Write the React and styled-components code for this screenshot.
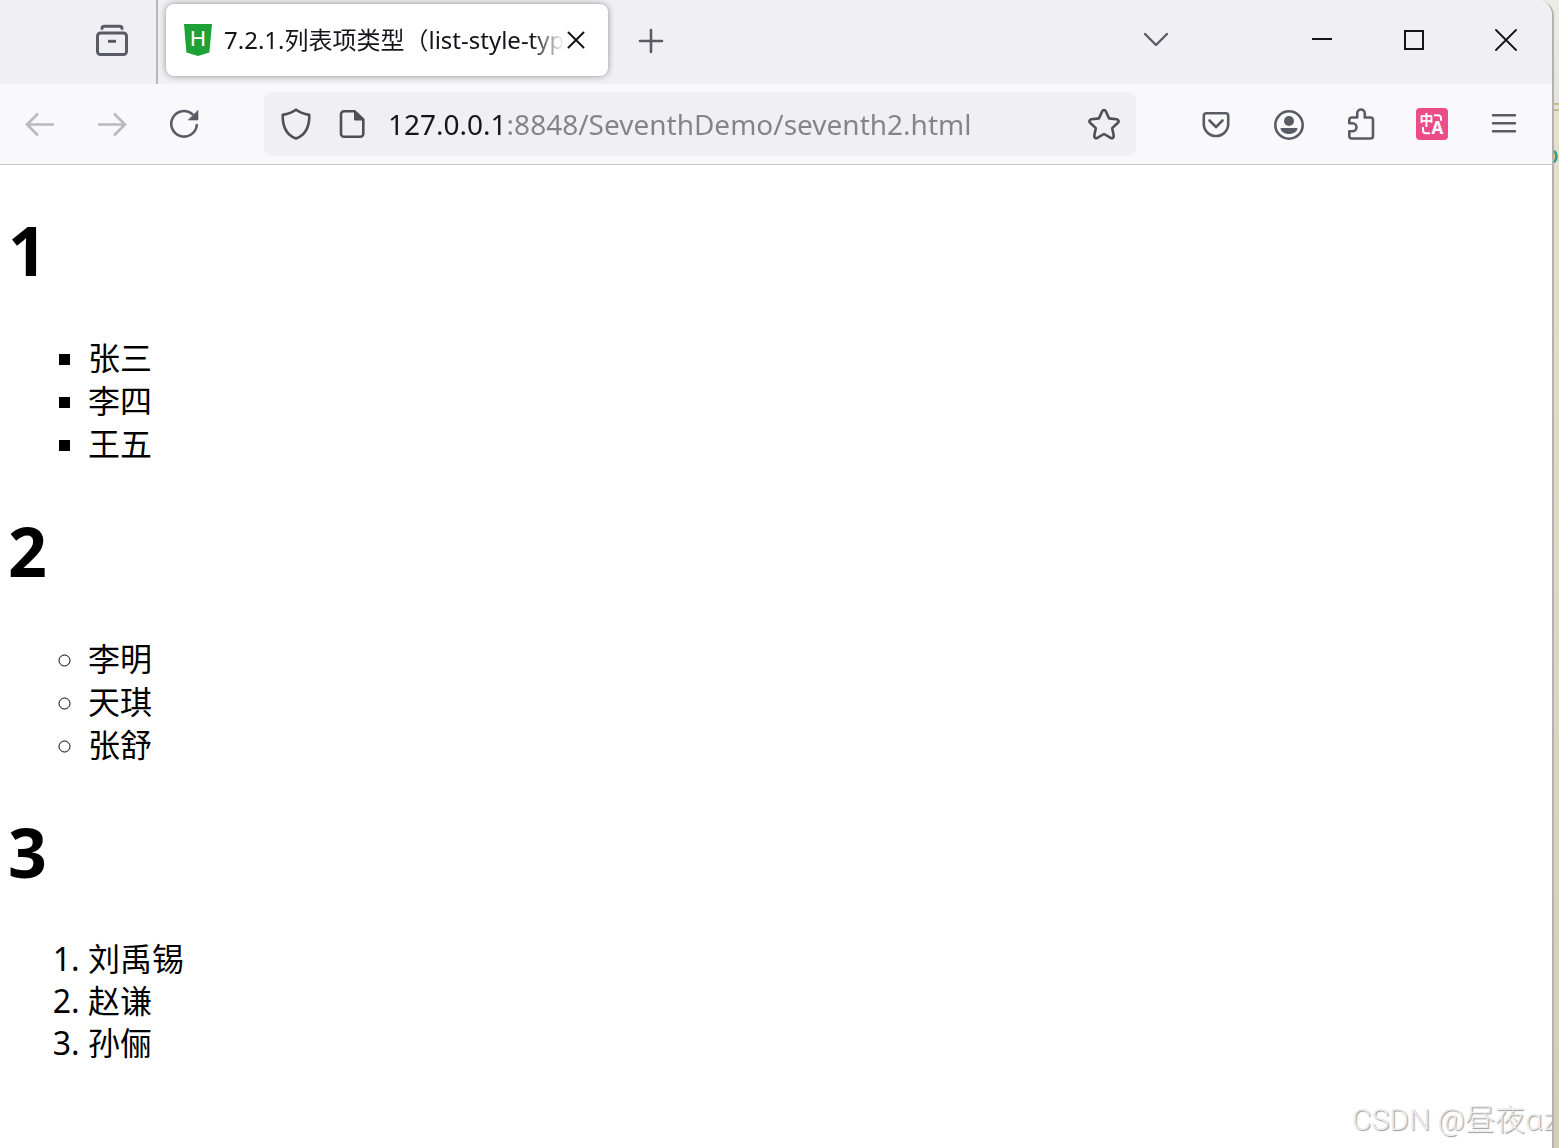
import React from "react";
import styled, { createGlobalStyle } from "styled-components";

const sections = [
  { title: "1", type: "square", items: ["张三", "李四", "王五"] },
  { title: "2", type: "circle", items: ["李明", "天琪", "张舒"] },
  { title: "3", type: "decimal", items: ["刘禹锡", "赵谦", "孙俪"] },
];

const Icon = ({ size = 32, width = 2.6, children }) => (
  <svg
    width={size}
    height={size}
    viewBox={`0 0 ${size} ${size}`}
    fill="none"
    stroke="currentColor"
    strokeWidth={width}
    strokeLinecap="round"
    strokeLinejoin="round"
    aria-hidden="true"
  >
    {children}
  </svg>
);

const TitleBar = () => (
  <TopBar>
    <ViewButton aria-label="Firefox View">
      <Icon width={3}>
        <rect x="1.5" y="9" width="29" height="21.5" rx="3" />
        <path d="M6 4.5C6 3 7 2.3 8.5 2.3h15C25 2.3 26 3 26 4.5" />
        <path d="M12 17.3h8" strokeLinecap="butt" />
      </Icon>
    </ViewButton>
    <Tab role="tab" aria-selected="true">
      <svg width="28" height="32" viewBox="0 0 28 32" aria-hidden="true">
        <path d="M0 0h28l-2.6 28.6L14 32 2.4 28.6z" fill="#1ea237" />
        <text x="14" y="22" textAnchor="middle" fontFamily="Liberation Sans, sans-serif" fontSize="22" fill="#fff">
          H
        </text>
      </svg>
      <TabTitle>7.2.1.列表项类型（list-style-type）</TabTitle>
      <CloseTab aria-label="Close tab">
        <Icon size={20} width={2}>
          <path d="M2.5 2.5l15 15M17.5 2.5l-15 15" />
        </Icon>
      </CloseTab>
    </Tab>
    <NewTab aria-label="New tab">
      <Icon size={26}>
        <path d="M13 2v22M2 13h22" />
      </Icon>
    </NewTab>
    <Spacer />
    <ListTabs aria-label="List all tabs">
      <Icon width={2.4}>
        <path d="M5 10l11 11 11-11" />
      </Icon>
    </ListTabs>
    <SystemButton aria-label="Minimize">
      <Icon size={22} width={2}>
        <path d="M1 10h20" strokeLinecap="butt" />
      </Icon>
    </SystemButton>
    <SystemButton aria-label="Maximize">
      <Icon size={22} width={2}>
        <rect x="2" y="2" width="18" height="18" strokeLinejoin="miter" />
      </Icon>
    </SystemButton>
    <SystemButton aria-label="Close">
      <Icon size={22} width={1.8}>
        <path d="M1 1l20 20M21 1L1 21" />
      </Icon>
    </SystemButton>
  </TopBar>
);

const NavBar = () => (
  <Toolbar>
    <ToolButton aria-label="Back" disabled>
      <Icon>
        <path d="M30 16.5H3M14 5.500L3 16.500l11 11" strokeLinecap="butt" strokeLinejoin="miter" />
      </Icon>
    </ToolButton>
    <ToolButton aria-label="Forward" disabled>
      <Icon>
        <path d="M2 16.500h27M18 5.500l11 11-11 11" strokeLinecap="butt" strokeLinejoin="miter" />
      </Icon>
    </ToolButton>
    <ToolButton aria-label="Reload">
      <Icon>
        <path d="M24.500 6.200A12.800 12.800 0 1 0 28.800 17" />
        <path d="M30 2.500V12h-9.500z" fill="currentColor" strokeWidth="0.6" />
      </Icon>
    </ToolButton>
    <AddressBar>
      <AddressButton aria-label="Tracking protection">
        <Icon>
          <path d="M16 1.700c4 2.900 8.600 4.300 13.300 5.200C29.500 18 25.500 27 16 30.500 6.500 27 2.500 18 2.700 6.900 7.400 6 12 4.600 16 1.700z" />
        </Icon>
      </AddressButton>
      <AddressButton aria-label="Site information">
        <Icon>
          <path d="M18.500 3.300H8a3 3 0 0 0-3 3v19.400a3 3 0 0 0 3 3h16.300a3 3 0 0 0 3-3V11.500z" />
          <path d="M18.500 3v9h9z" fill="currentColor" strokeWidth="1" />
        </Icon>
      </AddressButton>
      <Address aria-label="Address" defaultValue="127.0.0.1:8848/SeventhDemo/seventh2.html" spellCheck="false" />
      <AddressButton aria-label="Bookmark this page">
        <Icon>
          <path d="M14.200 3.200c.7-1.600 2.900-1.600 3.600 0l3.200 7.200 7.700.9c1.800.2 2.500 2.300 1.200 3.500l-5.700 5.300 1.500 7.700c.3 1.700-1.500 3-3 2.100L16 26l-6.700 3.900c-1.500.9-3.300-.4-3-2.100l1.500-7.700-5.700-5.300C.8 13.600 1.500 11.500 3.300 11.300l7.700-.9z" />
        </Icon>
      </AddressButton>
    </AddressBar>
    <ToolButton aria-label="Save to Pocket">
      <Icon>
        <path d="M6.300 5.200h19.400a2.500 2.500 0 0 1 2.500 2.500V16a12.200 12 0 0 1-24.400 0V7.700a2.500 2.500 0 0 1 2.500-2.500z" />
        <path d="M9.500 12.500l6.500 6.500 6.500-6.500" />
      </Icon>
    </ToolButton>
    <ToolButton aria-label="Account">
      <Icon>
        <circle cx="17" cy="17" r="13.700" />
        <circle cx="17" cy="13" r="5" fill="currentColor" stroke="none" />
        <path d="M8.500 20h17c0 3.500-4 6-8.500 6s-8.500-2.500-8.500-6z" fill="currentColor" stroke="none" />
      </Icon>
    </ToolButton>
    <ToolButton aria-label="Extensions">
      <Icon>
        <path d="M5.300 15.300v-3.300A2.500 2.500 0 0 1 7.800 9.500h5.400V5.300a3.800 3.800 0 0 1 7.600 0v4.200h5.700A2.500 2.500 0 0 1 29 12v16a2.500 2.500 0 0 1-2.500 2.500H7.800A2.500 2.500 0 0 1 5.300 28v-4.700H8.500a4 4 0 0 0 0-8z" />
      </Icon>
    </ToolButton>
    <ToolButton aria-label="Translate">
      <svg width="32" height="32" viewBox="0 0 32 32" aria-hidden="true">
        <rect width="32" height="32" rx="4" fill="#eb4d88" />
        <g fill="none" stroke="#fff" strokeWidth="2">
          <path d="M18 7.200h4a3 3 0 0 1 3 3v2.500M7 19v3.300a3 3 0 0 0 3 3h4" />
        </g>
        <g fill="#fff" textAnchor="middle" fontWeight="700">
          <text x="10.500" y="16.500" fontSize="14" fontFamily="Noto Sans CJK SC, sans-serif">
            中
          </text>
          <text x="21.500" y="26" fontSize="17" fontFamily="Noto Sans, sans-serif">
            A
          </text>
        </g>
      </svg>
    </ToolButton>
    <ToolButton aria-label="Open menu">
      <Icon width={2.4}>
        <path d="M5 7.300h22M5 15.300h22M5 23.300h22" />
      </Icon>
    </ToolButton>
  </Toolbar>
);

const App = () => {
  return (
    <>
      <GlobalStyle />
      <Desktop>
        <Window>
          <TitleBar />
          <NavBar />
          <Page>
            {sections.map(({ title, type, items }) => (
              <section key={title}>
                <Heading>{title}</Heading>
                <List as={type === "decimal" ? "ol" : "ul"} $type={type}>
                  {items.map((name) => (
                    <li key={name}>{name}</li>
                  ))}
                </List>
              </section>
            ))}
          </Page>
          <Watermark>CSDN @昼夜ɑz</Watermark>
        </Window>
        <Behind>
          <Letter>o</Letter>
        </Behind>
      </Desktop>
    </>
  );
};

const GlobalStyle = createGlobalStyle`
  * {
    box-sizing: border-box;
  }
  body {
    margin: 0;
    color: #000;
    background: #ecebe6;
    font-family: "Noto Sans", "Noto Sans CJK SC", sans-serif;
  }
`;

const Desktop = styled.div`
  display: flex;
  min-height: 100vh;
`;

const Window = styled.div`
  position: relative;
  display: flex;
  flex: 1;
  flex-direction: column;
  min-width: 0;
  overflow: hidden;
  background: #fff;
  border-right: 2px solid #b4b2ae;
  border-top-right-radius: 16px;
`;

const IconButton = styled.button`
  display: flex;
  flex: none;
  align-items: center;
  justify-content: center;
  padding: 0;
  border: none;
  background: none;
  color: #5b5b66;
`;

const TopBar = styled.div`
  display: flex;
  align-items: flex-start;
  height: 84px;
  background: #f0eff4;
`;

const ViewButton = styled(IconButton)`
  width: 158px;
  height: 84px;
  padding: 0 0 4px 68px;
  border-right: 2px solid #b8b7bc;
`;

const Tab = styled.div`
  display: flex;
  align-items: center;
  width: 442px;
  height: 72px;
  margin: 4px 0 0 8px;
  padding: 0 20px 0 18px;
  background: #fff;
  border-radius: 8px;
  box-shadow: 0 0 6px rgba(0, 0, 0, 0.4);
  svg {
    flex: none;
  }
`;

const TabTitle = styled.span`
  flex: 1;
  margin-left: 12px;
  overflow: hidden;
  white-space: nowrap;
  font-size: 24px;
  line-height: 36px;
  color: #15141a;
  mask-image: linear-gradient(to left, transparent, #000 32px);
`;

const CloseTab = styled(IconButton)`
  width: 24px;
  height: 24px;
  color: #15141a;
`;

const NewTab = styled(IconButton)`
  width: 64px;
  height: 82px;
  margin-left: 11px;
`;

const Spacer = styled.div`
  flex: 1;
`;

const ListTabs = styled(IconButton)`
  width: 64px;
  height: 80px;
  margin-right: 88px;
`;

const SystemButton = styled(IconButton)`
  width: 92px;
  height: 80px;
  color: #15141a;
`;

const Toolbar = styled.div`
  display: flex;
  align-items: center;
  height: 81px;
  padding: 0 12px 0 4px;
  background: #f9f9fb;
  border-bottom: 1px solid #c8c8cc;
`;

const ToolButton = styled(IconButton)`
  width: 72px;
  height: 64px;
  &:disabled {
    color: #b9b9be;
  }
`;

const AddressBar = styled.div`
  display: flex;
  flex: 1;
  align-items: center;
  height: 64px;
  min-width: 0;
  margin: 0 44px;
  padding: 0 4px;
  background: #f0eff4;
  border-radius: 8px;
`;

const AddressButton = styled(IconButton)`
  width: 56px;
  height: 56px;
  color: #4f4f55;
`;

/* host part is dark, port and path are grey */
const Address = styled.input`
  flex: 1;
  min-width: 0;
  height: 48px;
  padding: 0 0 0 8px;
  border: none;
  outline: none;
  font: 28px "Noto Sans", sans-serif;
  color: transparent;
  caret-color: #15141a;
  background: linear-gradient(to right, #15141a 126px, #84838a 126px);
  background-clip: text;
`;

const Page = styled.main`
  flex: 1;
  padding: 42px 8px 0;
`;

const Heading = styled.h1`
  margin: 0 0 43px;
  font-size: 68px;
  line-height: 86px;
`;

const List = styled.ul`
  margin: 0 0 43px;
  padding-left: 80px;
  font-size: 32px;
  line-height: ${({ $type }) => ($type === "decimal" ? 42 : 43)}px;
  list-style-type: ${({ $type }) => $type};
`;

const Watermark = styled.div`
  position: absolute;
  right: -6px;
  bottom: 6px;
  white-space: nowrap;
  font-size: 30px;
  line-height: 44px;
  font-family: Roboto, "Noto Sans CJK SC", sans-serif;
  font-weight: 300;
  color: #ececec;
  text-shadow: 1px 1px 1px #999;
`;

const Behind = styled.div`
  position: relative;
  width: 5px;
  overflow: hidden;
  background:
    linear-gradient(#c9b98a, #c9b98a) 0 103px / 100% 2px no-repeat,
    linear-gradient(#c9b98a, #c9b98a) 0 109px / 100% 2px no-repeat,
    linear-gradient(#ecebe6, #e4e3df 104px, #e6e1cf 112px, #d3cdb9);
`;

const Letter = styled.span`
  position: absolute;
  top: 138px;
  right: 0;
  font-size: 28px;
  line-height: 30px;
  color: #2f9c72;
`;

export default App;
